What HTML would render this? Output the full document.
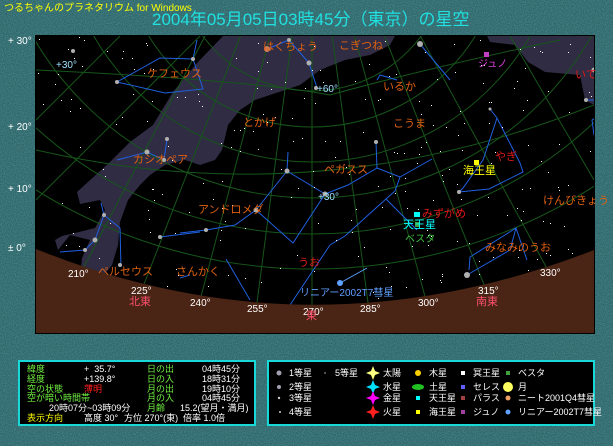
<!DOCTYPE html>
<html><head><meta charset="utf-8">
<style>
html,body{margin:0;padding:0}
body{width:613px;height:446px;overflow:hidden;background:#2f6668;position:relative;font-family:"Liberation Sans","Noto Sans CJK JP",sans-serif}
.t{position:absolute;white-space:nowrap;line-height:1}
.panel{position:absolute;background:#000;border:2px solid #18d8d8;box-sizing:border-box}
.g{color:#70f040}.w{color:#fff}
</style></head><body>
<svg width="613" height="446" style="position:absolute;left:0;top:0">
<defs>
<filter id="nz" x="0" y="0" width="100%" height="100%"><feTurbulence type="fractalNoise" baseFrequency="0.9" numOctaves="1" seed="3"/><feColorMatrix values="0 0 0 0 0.12  0 0 0 0 0.38  0 0 0 0 0.45  0 0 0 1.6 -0.5"/><feComposite in2="SourceGraphic" operator="in"/></filter>
<clipPath id="cl"><rect x="36" y="36" width="558" height="297"/></clipPath>
</defs>
<rect width="613" height="446" fill="#2f6668"/>
<rect width="613" height="446" fill="#000" filter="url(#nz)" opacity="0.6"/>
<rect x="35" y="35" width="560" height="299" fill="#000"/>
<g clip-path="url(#cl)">
<path d="M223,36 L395,36 L390,45 L370,55 L345,60 L320,70 L300,85 L270,95 L255,100 L240,110 L228,125 L222,150 L215,160 L200,165 L185,160 L165,165 L150,175 L140,185 L128,200 L120,222 L118,245 L112,265 L100,280 L80,280 L82,258 L90,240 L70,235 L58,250 L55,240 L62,236 L75,233 L95,228 L105,210 L100,200 L80,204 L77,192 L110,162 L130,142 L153,125 L173,92 L197,63 Z" fill="#2f2c44"/>
<path d="M487,36 L594,36 L594,105 L585,100 L580,75 L545,72 L528,62 L515,45 L490,42 Z" fill="#2f2c44"/>
<g fill="none" stroke="#17561a" stroke-width="1">
<circle cx="312" cy="-252" r="521"/><circle cx="312" cy="-178" r="412"/><circle cx="312" cy="-124" r="322"/>
<circle cx="312" cy="-90" r="252"/><circle cx="312" cy="-65" r="192"/><circle cx="312" cy="-45" r="136"/>
<path d="M36,150 Q320,215 594,105"/><path d="M36,70 Q250,80 330,95 L330,95 Q420,70 560,40"/>
<path d="M312,36 L312,333"/>
<path d="M78,278 L245,-40"/><path d="M141,292 L270,-40"/><path d="M199,304 L290,-40"/><path d="M256,310 L302,-40"/>
<path d="M369,310 L322,-40"/><path d="M427,304 L334,-40"/><path d="M487,292 L354,-40"/><path d="M550,274 L379,-40"/>
<path d="M36,200 L200,36"/><path d="M36,120 L120,36"/><path d="M510,36 L594,180"/>
</g>
<g fill="none" stroke="#2060e0" stroke-width="1">
<path d="M117,82 L160,58 L193,59 L203,89 L165,93 L117,82 M193,59 L197,40"/>
<path d="M267,49 L289,40 L309,63 L317,88"/>
<path d="M117,160 L147,152 L164,160 L167,139"/>
<path d="M180,233 L206,230 L235,225 L256,210 L287,171 L288,152 M256,210 L293,243 L325,194 L287,171 M325,194 L348,185 L377,168 L376,142 M377,168 L400,177 L432,159"/>
<path d="M420,44 L450,80"/>
<path d="M400,177 L395,191 L386,199 L417,230 M386,199 L345,236 L330,245"/>
<path d="M490,109 L497,118 L483,160 L463,188 L459,192 L489,189 L523,172 L520,163 L497,118"/>
<path d="M377,80 L380,75 L397,80"/>
<path d="M467,275 L510,250 L516,228 L470,257 L469,270 M516,228 L527,260"/>
<path d="M101,203 L104,215 L120,228 L121,267 M104,215 L95,240 L85,250 L60,252"/>
<path d="M160,237 L200,232"/>
<path d="M226,259 L250,300 M180,278 L190,275"/>
<path d="M330,245 L290,305"/>
<path d="M586,100 L600,100 M600,115 L592,120 L594,135"/>
</g>
<path d="M36,249 Q312,360 594,250 L594,333 L36,333 Z" fill="#4a2414"/>
<path d="M340,283 L367,268" stroke="#60a0ff" stroke-width="1"/>
<circle cx="340" cy="283" r="3" fill="#60a0ff"/>
<g id="stars"></g>
<g fill="#b0b0b0">
<circle cx="420" cy="44" r="3"/><circle cx="309" cy="63" r="2.5"/><circle cx="267" cy="49" r="3" fill="#d08060"/>
<circle cx="289" cy="40" r="2"/><circle cx="193" cy="59" r="2"/><circle cx="117" cy="82" r="2"/><circle cx="73" cy="51" r="2"/>
<circle cx="147" cy="152" r="2.5"/><circle cx="167" cy="139" r="2"/><circle cx="164" cy="160" r="2"/>
<circle cx="256" cy="210" r="2.5"/><circle cx="287" cy="171" r="2.5"/><circle cx="325" cy="194" r="2.5"/><circle cx="206" cy="230" r="2"/>
<circle cx="160" cy="237" r="2"/><circle cx="376" cy="142" r="2"/><circle cx="459" cy="192" r="2"/><circle cx="467" cy="275" r="3"/>
<circle cx="104" cy="215" r="2"/><circle cx="95" cy="240" r="2.5"/><circle cx="85" cy="250" r="2"/><circle cx="120" cy="265" r="2"/>
<circle cx="586" cy="100" r="2"/><circle cx="594" cy="70" r="2.5"/><circle cx="490" cy="109" r="1.5"/><circle cx="316" cy="88" r="2"/>
</g>
<rect x="484" y="52" width="5" height="5" fill="#c040c0"/>
<rect x="474" y="160" width="5" height="5" fill="#ffff00"/>
<rect x="414" y="212" width="6" height="5" fill="#00ffff"/>
<rect x="415" y="222" width="5" height="5" fill="#40a040"/>
</g>
</svg>
<div class="t" style="left:4px;top:4px;font-size:10px;color:#ffff00">つるちゃんのプラネタリウム for Windows</div>
<div class="t" style="left:152px;top:11px;font-size:17px;color:#20e0e0">2004年05月05日03時45分（東京）の星空</div>
<div class="t w" style="left:8px;top:37px;font-size:10px">+ 30°</div>
<div class="t w" style="left:8px;top:123px;font-size:10px">+ 20°</div>
<div class="t w" style="left:8px;top:185px;font-size:10px">+ 10°</div>
<div class="t w" style="left:8px;top:244px;font-size:10px">± 0°</div>
<div style="position:absolute;left:0;top:0;font-size:11px;color:#e06010">
<div class="t" style="left:263px;top:42px">はくちょう</div>
<div class="t" style="left:339px;top:41px">こぎつね</div>
<div class="t" style="left:147px;top:69px">ケフェウス</div>
<div class="t" style="left:243px;top:118px">とかげ</div>
<div class="t" style="left:133px;top:155px">カシオペア</div>
<div class="t" style="left:198px;top:205px">アンドロメダ</div>
<div class="t" style="left:324px;top:165px">ペガスス</div>
<div class="t" style="left:383px;top:82px">いるか</div>
<div class="t" style="left:393px;top:119px">こうま</div>
<div class="t" style="left:543px;top:196px">けんびきょう</div>
<div class="t" style="left:485px;top:243px">みなみのうお</div>
<div class="t" style="left:98px;top:267px">ペルセウス</div>
<div class="t" style="left:176px;top:267px">さんかく</div>
<div class="t" style="left:298px;top:258px;color:#e01818">うお</div>
<div class="t" style="left:422px;top:209px;color:#e01818">みずがめ</div>
<div class="t" style="left:495px;top:152px;color:#e01818">やぎ</div>
<div class="t" style="left:575px;top:70px;color:#e01818">いて</div>
<div class="t" style="left:463px;top:166px;color:#ffff00">海王星</div>
<div class="t" style="left:403px;top:220px;color:#00ffff">天王星</div>
<div class="t" style="left:405px;top:235px;color:#40c040;font-size:10px">ベスタ</div>
<div class="t" style="left:478px;top:60px;color:#e040e0;font-size:10px">ジュノ</div>
<div class="t" style="left:300px;top:289px;color:#60a0ff;font-size:10px">リニアー2002T7彗星</div>
</div>
<div style="position:absolute;left:0;top:0;font-size:10px;color:#a0e0ff">
<div class="t" style="left:56px;top:61px">+30°</div>
<div class="t" style="left:317px;top:85px">+60°</div>
<div class="t" style="left:318px;top:193px">+30°</div>
</div>
<div style="position:absolute;left:0;top:0;font-size:10px;color:#fff">
<div class="t" style="left:68px;top:270px">210°</div>
<div class="t" style="left:131px;top:287px">225°</div>
<div class="t" style="left:190px;top:299px">240°</div>
<div class="t" style="left:247px;top:305px">255°</div>
<div class="t" style="left:303px;top:308px">270°</div>
<div class="t" style="left:360px;top:305px">285°</div>
<div class="t" style="left:418px;top:299px">300°</div>
<div class="t" style="left:478px;top:287px">315°</div>
<div class="t" style="left:540px;top:269px">330°</div>
<div class="t" style="left:129px;top:297px;color:#ff5070;font-size:11px">北東</div>
<div class="t" style="left:306px;top:311px;color:#ff5070;font-size:11px">東</div>
<div class="t" style="left:476px;top:297px;color:#ff5070;font-size:11px">南東</div>
</div>
<div class="panel" style="left:18px;top:360px;width:238px;height:66px"></div>
<div style="position:absolute;left:0;top:0;font-size:9px">
<div class="t g" style="left:27px;top:365px">緯度</div><div class="t w" style="left:84px;top:365px">+&nbsp; 35.7°</div><div class="t g" style="left:147px;top:365px">日の出</div><div class="t w" style="left:202px;top:365px">04時45分</div>
<div class="t g" style="left:27px;top:375px">経度</div><div class="t w" style="left:84px;top:375px">+139.8°</div><div class="t g" style="left:147px;top:375px">日の入</div><div class="t w" style="left:202px;top:375px">18時31分</div>
<div class="t g" style="left:27px;top:385px">空の状態</div><div class="t" style="left:84px;top:385px;color:#ff2020">薄明</div><div class="t g" style="left:147px;top:385px">月の出</div><div class="t w" style="left:202px;top:385px">19時10分</div>
<div class="t g" style="left:27px;top:394px">空が暗い時間帯</div><div class="t g" style="left:147px;top:394px">月の入</div><div class="t w" style="left:202px;top:394px">04時45分</div>
<div class="t w" style="left:49px;top:404px">20時07分~03時09分</div><div class="t g" style="left:147px;top:404px">月齢</div><div class="t w" style="left:180px;top:404px">15.2(望月・満月)</div>
<div class="t" style="left:27px;top:414px;color:#ffff00">表示方向</div><div class="t w" style="left:84px;top:414px">高度 30°</div><div class="t w" style="left:124px;top:414px">方位 270°(東)</div><div class="t w" style="left:183px;top:414px">倍率 1.0倍</div>
</div>
<div class="panel" style="left:267px;top:360px;width:328px;height:66px"></div>
<div style="position:absolute;left:0;top:0;font-size:9px;color:#fff">
<div class="t" style="left:289px;top:369px">1等星</div><div class="t" style="left:289px;top:383px">2等星</div><div class="t" style="left:289px;top:394px">3等星</div><div class="t" style="left:289px;top:408px">4等星</div>
<div class="t" style="left:335px;top:369px">5等星</div>
<div class="t" style="left:383px;top:369px">太陽</div><div class="t" style="left:383px;top:383px">水星</div><div class="t" style="left:383px;top:394px">金星</div><div class="t" style="left:383px;top:408px">火星</div>
<div class="t" style="left:429px;top:369px">木星</div><div class="t" style="left:429px;top:383px">土星</div><div class="t" style="left:429px;top:394px">天王星</div><div class="t" style="left:429px;top:408px">海王星</div>
<div class="t" style="left:473px;top:369px">冥王星</div><div class="t" style="left:473px;top:383px">セレス</div><div class="t" style="left:473px;top:394px">パラス</div><div class="t" style="left:473px;top:408px">ジュノ</div>
<div class="t" style="left:518px;top:369px">ベスタ</div><div class="t" style="left:518px;top:383px">月</div><div class="t" style="left:518px;top:394px">ニート2001Q4彗星</div><div class="t" style="left:518px;top:408px">リニアー2002T7彗星</div>
</div>
<svg width="613" height="446" style="position:absolute;left:0;top:0">
<circle cx="279" cy="373" r="2.5" fill="#a0a0b0"/><circle cx="279" cy="387" r="2" fill="#a0a0b0"/><circle cx="279" cy="398" r="1.2" fill="#ccc"/><circle cx="280" cy="412" r="1" fill="#ccc"/><circle cx="325" cy="373" r="0.7" fill="#ccc"/>
<path d="M373,366 L375,371 L380,373 L375,375 L373,380 L371,375 L366,373 L371,371Z" fill="#ffff80"/>
<path d="M373,380 L375,385 L380,387 L375,389 L373,394 L371,389 L366,387 L371,385Z" fill="#00e0ff"/>
<path d="M373,391 L375,396 L380,398 L375,400 L373,405 L371,400 L366,398 L371,396Z" fill="#ff00ff"/>
<path d="M373,405 L375,410 L380,412 L375,414 L373,419 L371,414 L366,412 L371,410Z" fill="#ff2020"/>
<circle cx="418" cy="373" r="3" fill="#ffd000"/><ellipse cx="418" cy="387" rx="6" ry="3" fill="#20c020"/>
<rect x="416" y="396" width="4" height="4" fill="#00ffff"/><rect x="416" y="410" width="4" height="4" fill="#ffff00"/>
<rect x="461" y="371" width="4" height="4" fill="#fff"/><rect x="461" y="385" width="4" height="4" fill="#6060ff"/><rect x="461" y="396" width="4" height="4" fill="#a04040"/><rect x="461" y="410" width="4" height="4" fill="#a040a0"/>
<rect x="506" y="371" width="4" height="4" fill="#40a040"/><circle cx="508" cy="387" r="5" fill="#ffff60"/><circle cx="508" cy="398" r="2.5" fill="#f0a060"/><circle cx="508" cy="412" r="2.5" fill="#60a0ff"/>
</svg>
<script>
(function(){var s=7,g=document.getElementById('stars'),h='';function r(){s=(s*16807)%2147483647;return s/2147483647;}
for(var i=0;i<260;i++){var x=37+r()*556,y=37+r()*270;var t=(x-36)/558;var hz=(1-t)*(1-t)*249+2*t*(1-t)*360+t*t*250;if(y>hz-2)continue;h+='<rect x="'+x.toFixed(0)+'" y="'+y.toFixed(0)+'" width="1" height="1" fill="#fff"/>';}
g.innerHTML=h;})();
</script>
</body></html>
